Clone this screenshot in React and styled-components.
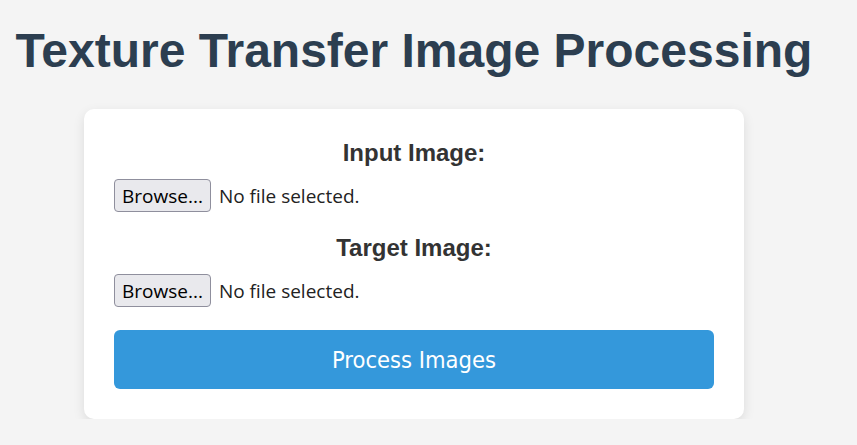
import React from "react";
import styled, { createGlobalStyle } from "styled-components";

const GlobalStyle = createGlobalStyle`
  html, body {
    margin: 0;
    padding: 0;
    background-color: #f4f4f4;
  }
  body {
    font-family: "Liberation Sans", Arial, sans-serif;
  }
`;

function FilePicker({ id }) {
  return (
    <PickerRow>
      <HiddenInput id={id} type="file" accept="image/*" />
      <BrowseButton htmlFor={id}>Browse...</BrowseButton>
      <FileName>No file selected.</FileName>
    </PickerRow>
  );
}

function App() {
  return (
    <Page>
      <GlobalStyle />
      <Title>Texture Transfer Image Processing</Title>
      <Card>
        <Field>
          <FieldLabel>Input Image:</FieldLabel>
          <FilePicker id="input-image" />
        </Field>
        <Field>
          <FieldLabel>Target Image:</FieldLabel>
          <FilePicker id="target-image" />
        </Field>
        <SubmitButton type="button">Process Images</SubmitButton>
      </Card>
    </Page>
  );
}

const Page = styled.div`
  width: 828px;
  display: flex;
  flex-direction: column;
  align-items: center;
`;

const Title = styled.h1`
  font-family: "Liberation Sans", Arial, sans-serif;
  font-weight: 700;
  font-size: 48px;
  line-height: 55px;
  color: #2c3e50;
  margin: 23px 0 31px;
  white-space: nowrap;
`;

const Card = styled.div`
  width: 600px;
  padding: 30px;
  background-color: #ffffff;
  border-radius: 10px;
  box-shadow: 0 4px 12px rgba(0, 0, 0, 0.1);
  display: flex;
  flex-direction: column;
`;

const Field = styled.div`
  display: flex;
  flex-direction: column;
  margin-bottom: 22px;
`;

const FieldLabel = styled.label`
  font-family: "Liberation Sans", Arial, sans-serif;
  font-weight: 700;
  font-size: 24px;
  line-height: 28px;
  color: #333333;
  text-align: center;
  margin-bottom: 12px;
`;

const PickerRow = styled.div`
  display: flex;
  align-items: center;
  gap: 8px;
  height: 33px;
`;

const HiddenInput = styled.input`
  display: none;
`;

const BrowseButton = styled.label`
  box-sizing: border-box;
  height: 33px;
  padding: 0 7px;
  display: flex;
  align-items: center;
  background-color: #e9e9ed;
  border: 1px solid #8f8f9d;
  border-radius: 4px;
  font-family: "Open Sans", "Noto Sans", sans-serif;
  font-size: 19px;
  color: #000000;
  cursor: pointer;
`;

const FileName = styled.span`
  font-family: "Open Sans", "Noto Sans", sans-serif;
  font-size: 19px;
  color: #222222;
`;

const SubmitButton = styled.button`
  height: 59px;
  margin-top: 1px;
  border: none;
  border-radius: 6px;
  background-color: #3498db;
  color: #ffffff;
  font-family: "DejaVu Sans Condensed", "DejaVu Sans", sans-serif;
  font-stretch: condensed;
  font-size: 23.5px;
  cursor: pointer;
`;

export default App;
